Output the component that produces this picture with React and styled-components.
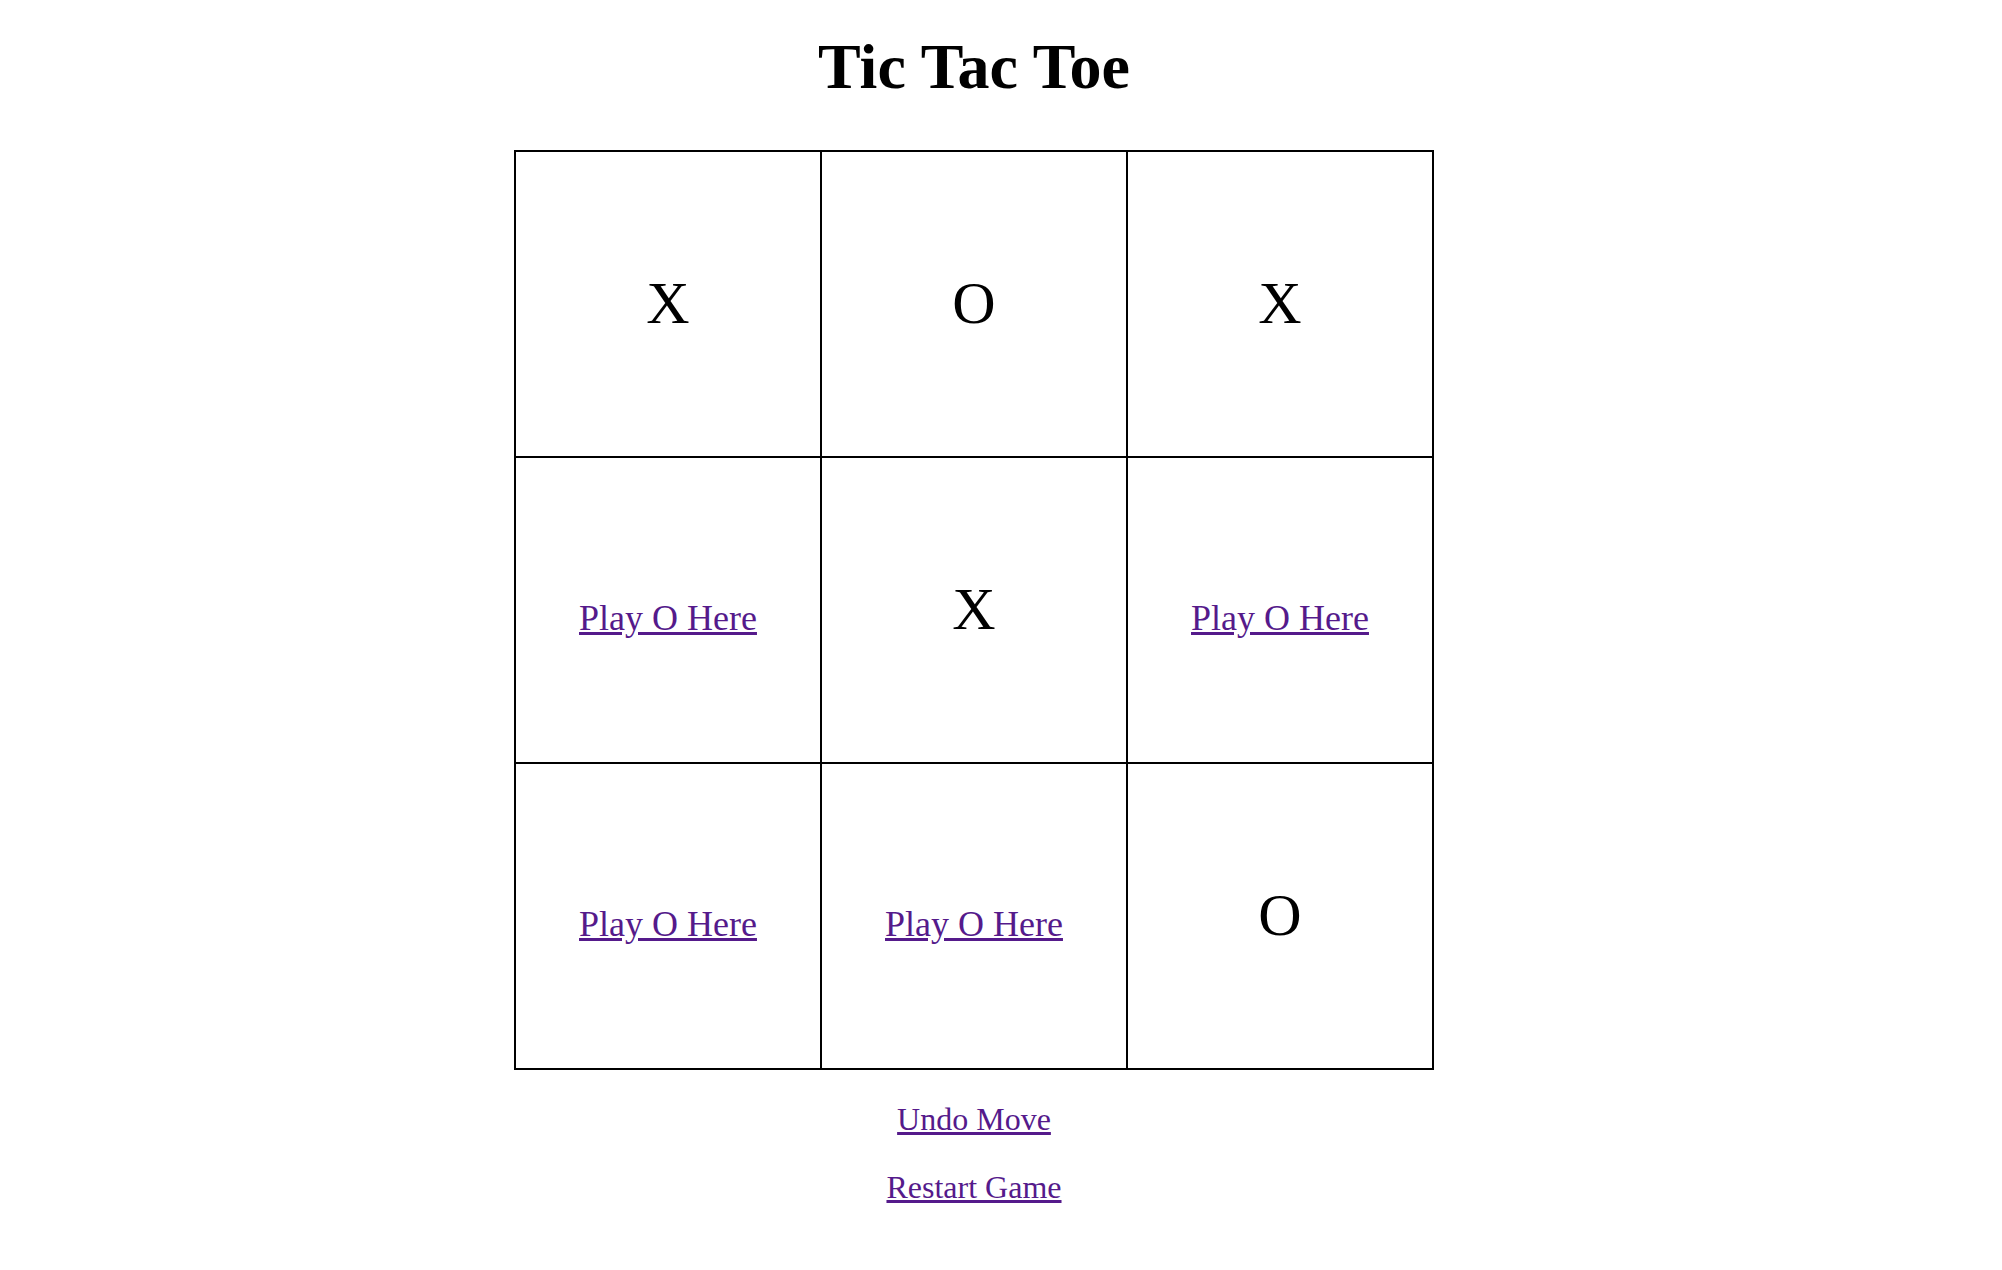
import React from "react";
import styled, { createGlobalStyle } from "styled-components";

const Global = createGlobalStyle`
  html, body { margin: 0; padding: 0; background: #ffffff; }
  body { font-family: "Liberation Serif", "Times New Roman", serif; color: #000; }
`;

const Page = styled.div`
  width: 1948px;
  padding-top: 35px;
  display: flex;
  flex-direction: column;
  align-items: center;
`;

const Title = styled.h1`
  margin: 0 0 51px;
  font-size: 64px;
  line-height: 1;
  font-weight: 700;
`;

const Board = styled.div`
  display: grid;
  grid-template-columns: repeat(3, 306px);
  grid-template-rows: repeat(3, 306px);
  border-left: 2px solid #000;
  border-top: 2px solid #000;
`;

const Cell = styled.div`
  box-sizing: border-box;
  border-right: 2px solid #000;
  border-bottom: 2px solid #000;
  display: flex;
  align-items: center;
  justify-content: center;
  padding: ${(p) => (p.$empty ? "16px 0 0" : "0 0 2px")};
  font-size: 60px;
  line-height: 1;
`;

const Link = styled.a`
  color: #551a8b;
  text-decoration: underline;
  font-size: ${(p) => p.$size}px;
  cursor: pointer;
`;

const Controls = styled.div`
  margin-top: 33px;
  display: flex;
  flex-direction: column;
  align-items: center;
  gap: 36px;
  line-height: 1;
`;

const board = ["X", "O", "X", null, "X", null, null, null, "O"];

export default function App() {
  return (
    <>
      <Global />
      <Page>
        <Title>Tic Tac Toe</Title>
        <Board>
          {board.map((v, i) => (
            <Cell key={i} $empty={!v}>
              {v ? (
                v
              ) : (
                <Link href="#" $size={36}>
                  Play O Here
                </Link>
              )}
            </Cell>
          ))}
        </Board>
        <Controls>
          <Link href="#" $size={32}>Undo Move</Link>
          <Link href="#" $size={32}>Restart Game</Link>
        </Controls>
      </Page>
    </>
  );
}
